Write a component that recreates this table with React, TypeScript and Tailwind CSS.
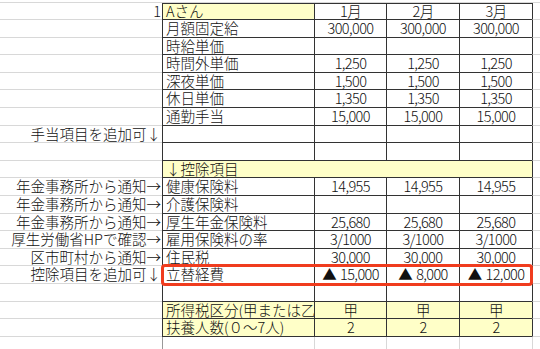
import React from "react";

type Row = {
  left?: string;
  label?: string;
  labelYellow?: boolean;
  rowYellow?: boolean;
  band?: boolean;
  vals?: string[];
};

const rows: Row[] = [
  { left: "1", label: "Aさん", labelYellow: true, vals: ["1月", "2月", "3月"] },
  { label: "月額固定給", vals: ["300,000", "300,000", "300,000"] },
  { label: "時給単価", vals: ["", "", ""] },
  { label: "時間外単価", vals: ["1,250", "1,250", "1,250"] },
  { label: "深夜単価", vals: ["1,500", "1,500", "1,500"] },
  { label: "休日単価", vals: ["1,350", "1,350", "1,350"] },
  { label: "通勤手当", vals: ["15,000", "15,000", "15,000"] },
  { left: "手当項目を追加可↓", label: "", vals: ["", "", ""] },
  { label: "", vals: ["", "", ""] },
  { label: "↓控除項目", band: true, vals: ["", "", ""] },
  { left: "年金事務所から通知→", label: "健康保険料", vals: ["14,955", "14,955", "14,955"] },
  { left: "年金事務所から通知→", label: "介護保険料", vals: ["", "", ""] },
  { left: "年金事務所から通知→", label: "厚生年金保険料", vals: ["25,680", "25,680", "25,680"] },
  { left: "厚生労働省HPで確認→", label: "雇用保険料の率", vals: ["3/1000", "3/1000", "3/1000"] },
  { left: "区市町村から通知→", label: "住民税", vals: ["30,000", "30,000", "30,000"] },
  { left: "控除項目を追加可↓", label: "立替経費", vals: ["▲|15,000", "▲|8,000", "▲|12,000"] },
  { label: "", vals: ["", "", ""] },
  { label: "所得税区分(甲または乙)", rowYellow: true, vals: ["甲", "甲", "甲"] },
  { label: "扶養人数(０～7人)", rowYellow: true, vals: ["2", "2", "2"] },
];

const widths = ["w-[72px]", "w-[73px]", "w-[73px]"];

function Val({ v }: { v: string }) {
  if (v.includes("|")) {
    const [a, b] = v.split("|");
    return (
      <>
        <span>{a}</span>
        <span className="ml-[4px]">{b}</span>
      </>
    );
  }
  return <>{v}</>;
}

export default function App() {
  return (
    <div
      className="relative w-[540px] h-[349px] overflow-hidden bg-white text-[14.5px] font-light text-[#111]"
      style={{ fontFamily: '"Noto Sans CJK JP", "Noto Sans", sans-serif' }}
    >
      <div className="h-[2.5px] border-b border-[#d8d8d8]" />
      {rows.map((r, i) => {
        const yellow = "bg-[#ffffc8]";
        return (
          <div key={i} className="flex h-[17.6px] leading-[16.6px]">
            <div className="w-[162px] shrink-0 border-b border-[#d8d8d8] text-right pr-[1px] whitespace-nowrap">
              {r.left ?? ""}
            </div>
            <div
              className={`w-[152px] shrink-0 border-l border-b border-[#333] pl-[3px] whitespace-nowrap overflow-hidden ${
                r.labelYellow || r.band || r.rowYellow ? yellow : ""
              }`}
            >
              {r.label}
            </div>
            {r.vals!.map((v, j) => (
              <div
                key={j}
                className={`${widths[j]} shrink-0 border-b border-[#333] text-center whitespace-nowrap tracking-[-0.6px] ${
                  r.band ? "" : "border-l"
                } ${r.band || r.rowYellow ? yellow : ""}`}
              >
                <Val v={v} />
              </div>
            ))}
            <div className="flex-1 border-l border-[#333] border-b border-b-[#d8d8d8]" />
          </div>
        );
      })}
      <div className="flex h-[17.6px]">
        <div className="w-[162px] shrink-0 border-b border-[#d8d8d8]" />
        <div className="w-[152px] shrink-0 border-l border-b border-[#d8d8d8] border-l-[#999]" />
        <div className="w-[72px] shrink-0 border-l border-b border-[#d8d8d8]" />
        <div className="w-[73px] shrink-0 border-l border-b border-[#d8d8d8]" />
        <div className="w-[73px] shrink-0 border-l border-b border-[#d8d8d8]" />
        <div className="flex-1 border-l border-b border-[#d8d8d8]" />
      </div>
      <div className="absolute left-[162px] top-[2.5px] w-[370px] border-t border-[#333]" />
      <div className="absolute left-[161px] top-[264px] w-[372px] h-[22px] border-[3px] border-[#f03c1e] rounded-[4px]" />
    </div>
  );
}
